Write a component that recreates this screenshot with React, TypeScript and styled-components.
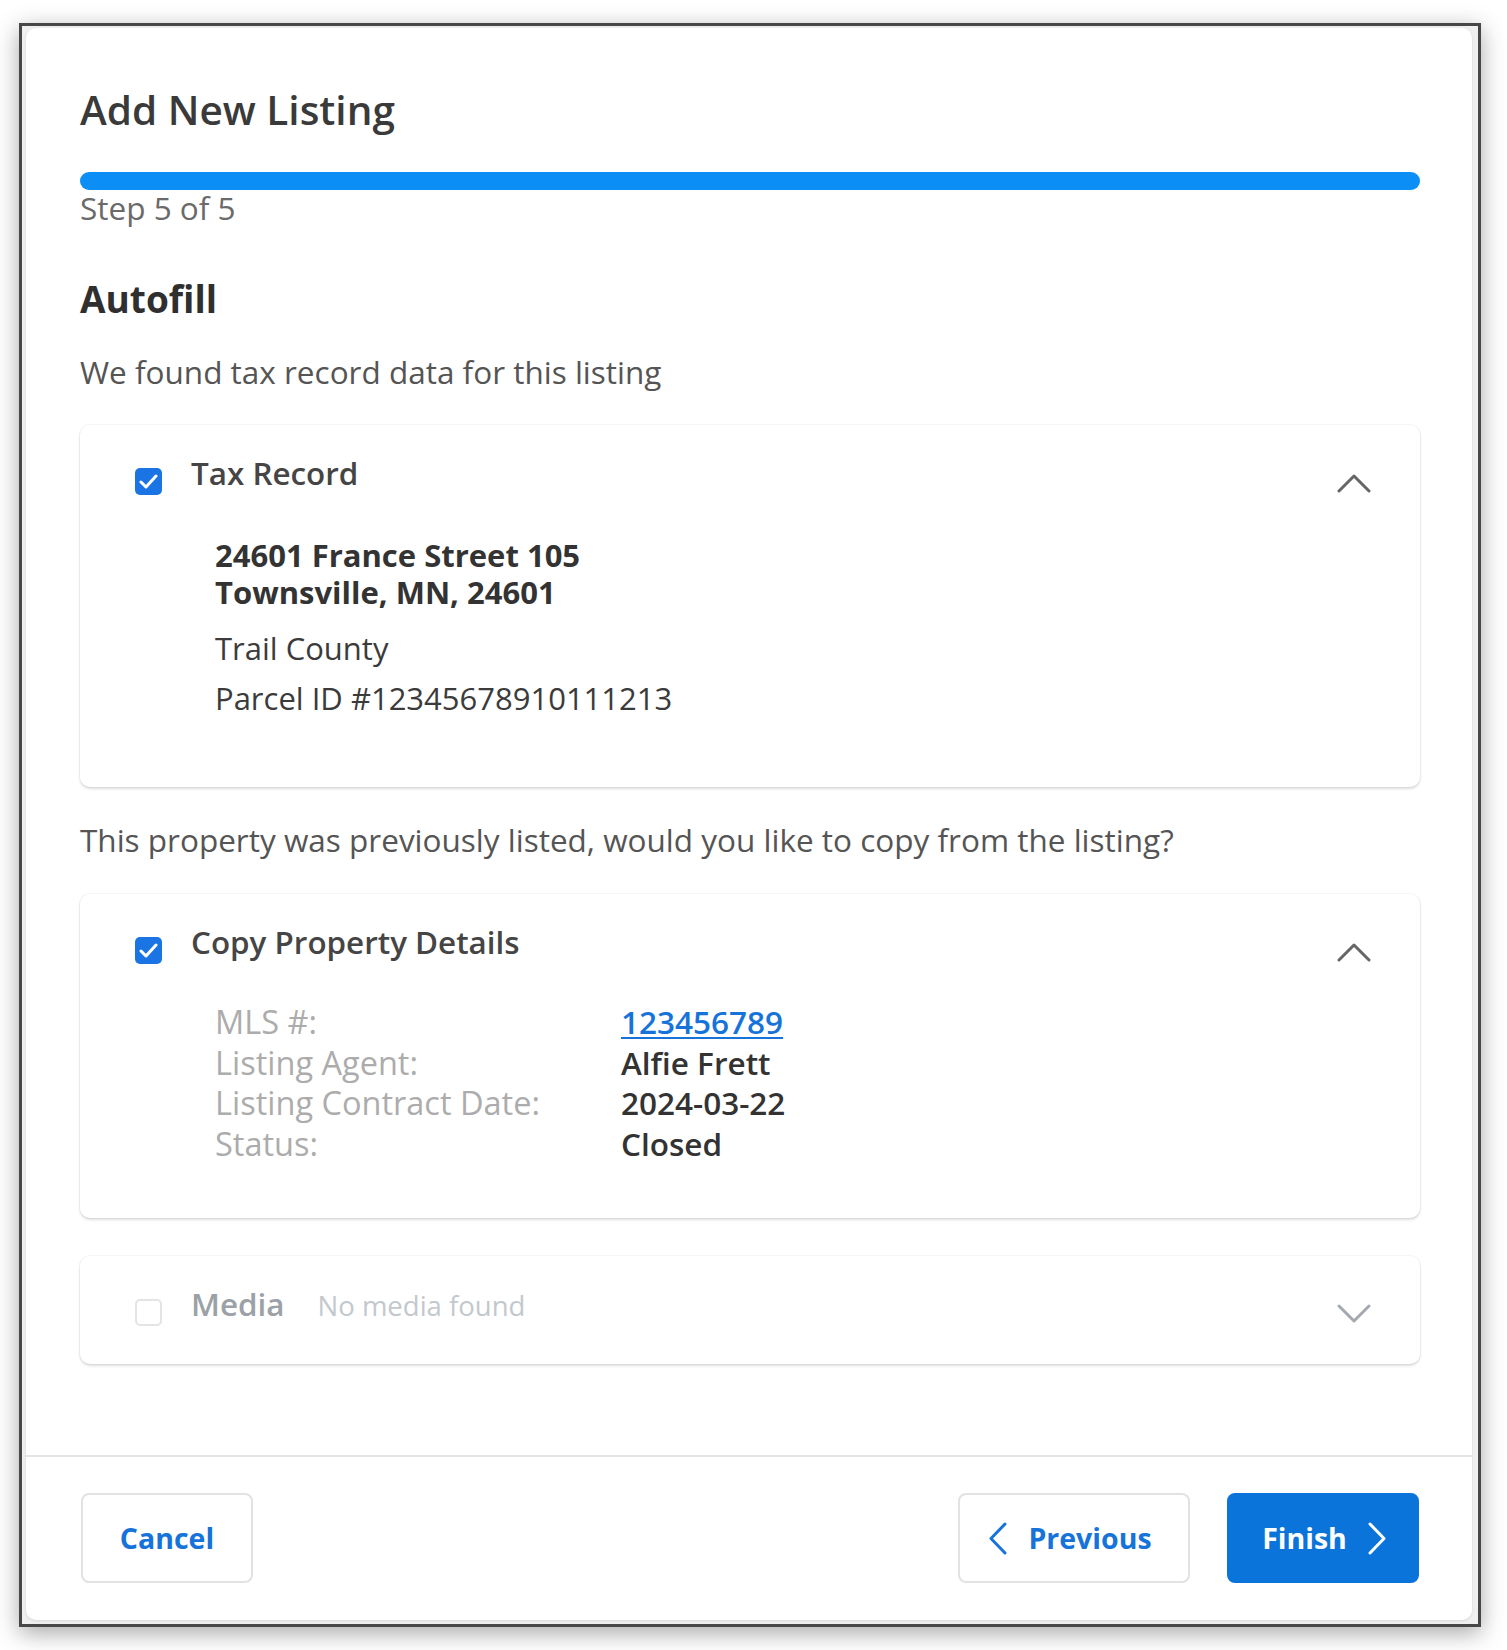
import React from 'react';
import styled, { createGlobalStyle } from 'styled-components';

const GlobalStyle = createGlobalStyle`
  body {
    margin: 0;
    background: #fff;
    font-family: "Open Sans", "Noto Sans", sans-serif;
  }
`;

const Frame = styled.div`
  width: 1462px;
  box-sizing: border-box;
  margin: 23px 0 24px 19px;
  border: 3px solid #474747;
  padding: 2px 6px 4px 4px;
  background: #efefef;
  box-shadow: 0 6px 22px rgba(0, 0, 0, 0.35);
`;

const Modal = styled.div`
  background: #fff;
  border-radius: 10px;
  box-shadow: 0 1px 3px rgba(0, 0, 0, 0.1);
`;

const Body = styled.div`
  padding: 58px 52px 0 54px;
`;

const Title = styled.h1`
  margin: 0;
  font-size: 40.5px;
  line-height: 48px;
  font-weight: 600;
  color: #3a3a3a;
`;

const Progress = styled.div`
  margin-top: 38px;
  height: 18px;
  border-radius: 9px;
  background: #0b8ef6;
`;

const StepText = styled.div`
  font-size: 31.5px;
  line-height: 36px;
  color: #6a6a6a;
`;

const SectionTitle = styled.h2`
  margin: 51px 0 0;
  font-size: 37px;
  line-height: 44px;
  font-weight: 700;
  color: #2f2f2f;
`;

const Lead = styled.p<{ $gap: number }>`
  margin: ${({ $gap }) => $gap}px 0 0;
  font-size: 31.5px;
  line-height: 40px;
  color: #555;
`;

const Card = styled.section<{ $gap: number; $bottom: number }>`
  margin-top: ${({ $gap }) => $gap}px;
  padding: 28px 49px ${({ $bottom }) => $bottom}px 55px;
  border-radius: 10px;
  background: #fff;
  box-shadow: 0 0 0 1px rgba(0, 0, 0, 0.035), 0 2px 3px rgba(0, 0, 0, 0.13);
`;

const CardHeader = styled.div`
  display: flex;
  align-items: flex-start;
`;

const Box = styled.span<{ $checked: boolean }>`
  flex-shrink: 0;
  width: 27px;
  height: 27px;
  margin-top: 15px;
  box-sizing: border-box;
  border-radius: 5px;
  display: flex;
  align-items: center;
  justify-content: center;
  background: ${({ $checked }) => ($checked ? '#1a74e3' : '#fff')};
  border: ${({ $checked }) => ($checked ? 'none' : '2px solid #e4e4e4')};
`;

const TitleGroup = styled.div`
  margin-left: 29px;
  display: flex;
  align-items: baseline;
`;

const CardTitle = styled.span<{ $muted?: boolean }>`
  font-size: 31.4px;
  line-height: 40px;
  font-weight: 600;
  color: ${({ $muted }) => ($muted ? '#9ba1a7' : '#454545')};
`;

const Hint = styled.span`
  margin-left: 33px;
  font-size: 27.5px;
  line-height: 40px;
  color: #c3c8cd;
`;

const Chevron = styled.svg`
  margin-left: auto;
  margin-top: 20px;
  flex-shrink: 0;
`;

const Address = styled.div`
  margin: 42px 0 0 80px;
  font-size: 31px;
  line-height: 37px;
  font-weight: 700;
  color: #333;
`;

const Info = styled.div`
  margin: 12px 0 0 80px;
  font-size: 31px;
  line-height: 50px;
  color: #3b3b3b;
`;

const Details = styled.dl`
  margin: 38px 0 0 80px;
  display: grid;
  grid-template-columns: 406px auto;
  font-size: 31.5px;
  line-height: 40.5px;
`;

const Label = styled.dt`
  font-size: 32.5px;
  color: #acacac;
`;

const Value = styled.dd`
  margin: 0;
  font-weight: 600;
  color: #333;
`;

const Link = styled.a`
  color: #1673da;
  text-decoration: underline;
  text-underline-offset: 3px;
  text-decoration-thickness: 2px;
`;

const Footer = styled.footer`
  margin-top: 91px;
  border-top: 2px solid #e4e4e4;
  padding: 36px 53px 37px 55px;
  display: flex;
  justify-content: space-between;
`;

const Actions = styled.div`
  display: flex;
  gap: 37px;
`;

const Button = styled.button<{ $primary?: boolean; $width: number; $shift?: number }>`
  width: ${({ $width }) => $width}px;
  height: 90px;
  box-sizing: border-box;
  border-radius: 8px;
  border: 2px solid ${({ $primary }) => ($primary ? '#0a74da' : '#e2e2e2')};
  background: ${({ $primary }) => ($primary ? '#0a74da' : '#fff')};
  color: ${({ $primary }) => ($primary ? '#fff' : '#1673da')};
  font-family: inherit;
  font-size: 28.5px;
  font-weight: 700;
  display: flex;
  align-items: center;
  justify-content: center;
  gap: 20px;
  padding: 0 ${({ $shift }) => ($shift && $shift > 0 ? $shift : 0)}px 0
    ${({ $shift }) => ($shift && $shift < 0 ? -$shift : 0)}px;
  cursor: pointer;
`;

const Check = () => (
  <svg width="19" height="15" viewBox="0 0 19 15">
    <polyline points="2,8 7,13 17,2" fill="none" stroke="#fff" strokeWidth="3" strokeLinecap="round" strokeLinejoin="round" />
  </svg>
);

const Caret = ({ up, color }: { up: boolean; color: string }) => (
  <Chevron width="34" height="20" viewBox="0 0 34 20">
    <polyline
      points={up ? '2,18 17,3 32,18' : '2,2 17,17 32,2'}
      fill="none"
      stroke={color}
      strokeWidth="3"
      strokeLinecap="round"
      strokeLinejoin="round"
    />
  </Chevron>
);

const Arrow = ({ dir }: { dir: 'left' | 'right' }) => (
  <svg width="20" height="33" viewBox="0 0 20 33">
    <polyline
      points={dir === 'left' ? '17,2 3,16.5 17,31' : '3,2 17,16.5 3,31'}
      fill="none"
      stroke="currentColor"
      strokeWidth="3"
      strokeLinecap="round"
      strokeLinejoin="round"
    />
  </svg>
);

const details = [
  { label: 'MLS #:', value: '123456789', link: true },
  { label: 'Listing Agent:', value: 'Alfie Frett' },
  { label: 'Listing Contract Date:', value: '2024-03-22' },
  { label: 'Status:', value: 'Closed' },
];

export default function App() {
  return (
    <>
      <GlobalStyle />
      <Frame>
        <Modal>
          <Body>
            <Title>Add New Listing</Title>
            <Progress />
            <StepText>Step 5 of 5</StepText>
            <SectionTitle>Autofill</SectionTitle>
            <Lead $gap={31}>We found tax record data for this listing</Lead>

            <Card $gap={33} $bottom={64}>
              <CardHeader>
                <Box $checked><Check /></Box>
                <TitleGroup>
                  <CardTitle>Tax Record</CardTitle>
                </TitleGroup>
                <Caret up color="#666" />
              </CardHeader>
              <Address>
                24601 France Street 105
                <br />
                Townsville, MN, 24601
              </Address>
              <Info>
                Trail County
                <br />
                Parcel ID #12345678910111213
              </Info>
            </Card>

            <Lead $gap={33}>This property was previously listed, would you like to copy from the listing?</Lead>

            <Card $gap={34} $bottom={54}>
              <CardHeader>
                <Box $checked><Check /></Box>
                <TitleGroup>
                  <CardTitle>Copy Property Details</CardTitle>
                </TitleGroup>
                <Caret up color="#666" />
              </CardHeader>
              <Details>
                {details.map((d) => (
                  <React.Fragment key={d.label}>
                    <Label>{d.label}</Label>
                    <Value>{d.link ? <Link href="#">{d.value}</Link> : d.value}</Value>
                  </React.Fragment>
                ))}
              </Details>
            </Card>

            <Card $gap={38} $bottom={38}>
              <CardHeader>
                <Box $checked={false} />
                <TitleGroup>
                  <CardTitle $muted>Media</CardTitle>
                  <Hint>No media found</Hint>
                </TitleGroup>
                <Caret up={false} color="#a3a9af" />
              </CardHeader>
            </Card>
          </Body>

          <Footer>
            <Button $width={172}>Cancel</Button>
            <Actions>
              <Button $width={232} $shift={8}>
                <Arrow dir="left" />
                Previous
              </Button>
              <Button $primary $width={192} $shift={-3}>
                Finish
                <Arrow dir="right" />
              </Button>
            </Actions>
          </Footer>
        </Modal>
      </Frame>
    </>
  );
}
